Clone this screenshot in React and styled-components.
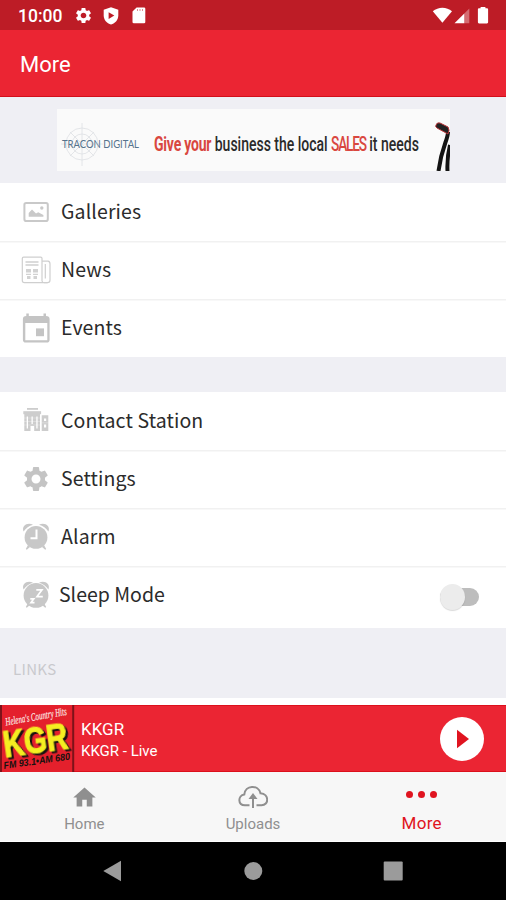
import React from 'react';
import styled, { createGlobalStyle } from 'styled-components';
import { MdSettings, MdHome } from 'react-icons/md';

const GlobalStyle = createGlobalStyle`
    body {
        margin: 0;
        background-color: #ffffff;
    }
    * {
        box-sizing: border-box;
    }
    svg {
        display: block;
        flex: none;
    }
`

function ShieldIcon(){
 return(
    <svg width="16" height="18" viewBox="0 0 16 18">
        <path fill="#fff" d="M8 0.3 L15.3 2.8 V8.5 C15.3 12.8 12.2 16.2 8 17.6 C3.8 16.2 0.7 12.8 0.7 8.5 V2.8 Z"/>
        <path fill="#bd1c26" d="M5.6 5.3 L11.3 8.6 L5.6 11.9 Z"/>
    </svg>
 );
}

function CardIcon(){
 return(
    <svg width="18" height="17" viewBox="-3 0 18 17">
        <path fill="#fff" d="M4.6 0.5 H12 Q13.3 0.5 13.3 1.8 V15 Q13.3 16.3 12 16.3 H1.8 Q0.5 16.3 0.5 15 V4.6 Z"/>
        <path stroke="#bd1c26" strokeOpacity="0.5" strokeWidth="1" d="M5.5 2 V4 M8 2 V4 M10.5 2 V4"/>
    </svg>
 );
}

function SignalIcons(){
 return(
    <svg width="60" height="20" viewBox="0 0 60 20">
        <path fill="#fff" d="M0.8 6.3 C6.2 1.4 14.6 1.4 20 6.3 L10.4 17.8 Z"/>
        <path fill="#fff" d="M22.5 18.3 L32.3 8.5 V18.3 Z"/>
        <path fill="#fff" fillOpacity="0.35" d="M32.3 8.5 L37.3 3.5 V18.3 H32.3 Z"/>
        <path fill="#fff" d="M48.6 3.2 V2 H53.4 V3.2 H55 Q56.1 3.2 56.1 4.3 V17.3 Q56.1 18.4 55 18.4 H47 Q45.9 18.4 45.9 17.3 V4.3 Q45.9 3.2 47 3.2 Z"/>
    </svg>
 );
}

function BannerAd(){
 return(
    <svg width="393" height="62" viewBox="0 0 393 62">
        <rect width="393" height="62" fill="#fafafa"/>
        <g fill="none" stroke="#dde0e3" strokeWidth="0.8">
            <circle cx="25" cy="35" r="16"/>
            <circle cx="25" cy="35" r="10"/>
            <path d="M25 14 V57 M4 35 H46 M13 23 L37 47 M13 47 L37 23"/>
        </g>
        <text x="5" y="39.3" fontSize="11" fontFamily="Lato, sans-serif" fill="#56738d" textLength="77" lengthAdjust="spacingAndGlyphs">TRACON DIGITAL</text>
        <text transform="translate(97 42) scale(0.667 1)" fill="#2b2b2b" fontWeight="500" fontSize="21">
            <tspan fill="#d9473f" fontWeight="700" letterSpacing="-0.3">Give your</tspan> business the local <tspan fill="#d9473f" fontSize="20.5" letterSpacing="-1.8">SALES</tspan> it needs
        </text>
        <path fill="none" stroke="#141414" strokeWidth="4" d="M391 23 C391 31 384.5 38 381.5 62"/>
        <path fill="none" stroke="#141414" strokeWidth="4" d="M393 36 C391 44 390 52 390.5 62"/>
        <path fill="#222" stroke="#b93538" strokeWidth="1" d="M379 16 Q380 13 383 14 L391 18 Q393 21 391 25 L380 19 Q378 18 379 16 Z"/>
    </svg>
 );
}

function GalleryIcon(){
 return(
    <svg width="32" height="32" viewBox="0 0 32 32">
        <rect x="4.4" y="7" width="23.4" height="18" rx="1.8" fill="none" stroke="#c9c9c9" strokeWidth="2"/>
        <path fill="#c9c9c9" d="M8.7 20.8 V17 L12 13.6 L16 17.6 L18.2 16.2 L23.4 19 V20.8 Z"/>
        <circle cx="21.8" cy="12" r="1.7" fill="#c9c9c9"/>
    </svg>
 );
}

function NewsIcon(){
 return(
    <svg width="32" height="32" viewBox="0 0 32 32">
        <g fill="none" stroke="#cfcfcf" strokeWidth="1.2">
            <path d="M22 27 V4.5 Q22 3.2 20.7 3.2 H3.6 Q2.3 3.2 2.3 4.5 V26.5 Q2.3 28.7 4.5 28.7 H27.5"/>
            <path d="M22 27 Q22.3 28.7 24.5 28.7 H27.5 Q30 28.7 30 26 V10 Q30 7.5 28 7.2 H22"/>
            <path d="M25.3 10 V24.5"/>
        </g>
        <path stroke="#cfcfcf" strokeWidth="1.5" d="M5.5 8 H18.5 M5.5 11 H18.5"/>
        <path fill="#d2d2d2" d="M6 15 H11 V18.5 H6 Z M13 15 H18 V18.5 H13 Z M6 19.8 H11 V21 H6 Z M13 19.8 H18 V21 H13 Z M7 22 H10.5 V25 H7 Z M13.5 22 H17 V25 H13.5 Z"/>
    </svg>
 );
}

function EventsIcon(){
 return(
    <svg width="32" height="32" viewBox="0 0 32 32">
        <path fill="#c4c4c4" fillRule="evenodd" d="M6.3 1.5 H8.8 V4 H23.5 V1.5 H26 V4 Q29.6 4 29.6 7 V27.8 Q29.6 30.6 26.8 30.6 H5.7 Q2.9 30.6 2.9 27.8 V7 Q2.9 4 6.3 4 Z M5.3 11 V28.3 H27.3 V11 Z"/>
        <rect x="16" y="16.4" width="8" height="7.8" fill="#c4c4c4"/>
    </svg>
 );
}

function StationIcon(){
 return(
    <svg width="32" height="32" viewBox="0 0 32 32">
        <g fill="#cdcdcd">
            <rect x="7" y="3" width="11" height="1.8"/>
            <rect x="3.3" y="6.2" width="17.8" height="3"/>
            <path fillRule="evenodd" d="M4.3 9 H20 V26 H14.2 V21 H10.5 V26 H4.3 Z M6.7 11.5 V23.5 H8 V11.5 Z M11.5 11.5 V19 H12.8 V11.5 Z M16.3 11.5 V23.5 H17.6 V11.5 Z"/>
            <path fillRule="evenodd" d="M21.7 10.3 H28.3 V26 H21.7 Z M24 13.5 V16 H26.2 V13.5 Z M24 19.5 V22.5 H26.2 V19.5 Z"/>
        </g>
        <path stroke="#fff" strokeOpacity="0.4" strokeWidth="0.7" d="M4 13 H20 M4 16.5 H20 M4 20 H20 M21.5 17.8 H28.5"/>
    </svg>
 );
}

function ClockIcon({ sleep }){
 return(
    <svg width="32" height="32" viewBox="0 0 32 32">
        <g fill="#c8c8c8">
            <path d="M3.6 10.5 C1 4.5 8 0.8 13 3.8 Q7 5.6 3.6 10.5 Z"/>
            <path d="M28.4 10.5 C31 4.5 24 0.8 19 3.8 Q25 5.6 28.4 10.5 Z"/>
            <circle cx="16" cy="16.4" r={sleep ? 12.4 : 11.4}/>
            <path d="M8 24 L10 26 L6.8 28.8 L5.8 28 Z M24 24 L22 26 L25.2 28.8 L26.2 28 Z"/>
        </g>
        {sleep
            ? <path fill="none" stroke="#fff" strokeWidth="1.7" d="M16.3 10.8 H22 L17 17.6 H22.8 M10.3 19.8 H13.8 L11 23.6 H14.5"/>
            : <path fill="none" stroke="#fff" strokeWidth="2" d="M16.5 8.5 V17.3 H10.5"/>}
    </svg>
 );
}

function StationLogo(){
 return(
    <LogoBox width="74" height="67" viewBox="0 0 74 67">
        <rect width="74" height="67" fill="#e4202c"/>
        <path stroke="#7d1219" strokeWidth="2" d="M1 0 V67 M73.2 0 V67"/>
        <text transform="translate(6 20.5) rotate(-10)" fontSize="11" fontStyle="italic" fontFamily="'Liberation Serif', serif" fill="#f9dcd9" stroke="#f9dcd9" strokeWidth="0.3" textLength="62" lengthAdjust="spacingAndGlyphs">Helena's Country Hits</text>
        <LogoText transform="translate(5 52.5) rotate(-8)" fontSize="37" textLength="65" lengthAdjust="spacingAndGlyphs">KGR</LogoText>
        <text transform="translate(4 64) rotate(-8)" fontSize="10" fontWeight="700" fontStyle="italic" fontFamily="'Liberation Sans', sans-serif" fill="#15120f" textLength="67" lengthAdjust="spacingAndGlyphs">FM 93.1•AM 680</text>
    </LogoBox>
 );
}

function UploadIcon(){
 return(
    <svg width="30" height="24" viewBox="0 0 30 24">
        <path fill="none" stroke="#8f8f8f" strokeWidth="2" d="M11.5 20.3 H7 C-0.5 20 -0.3 10.5 6.3 9.5 C7 0 20.5 -0.8 22.5 8.3 C31.5 9 31 20.3 23.5 20.3 H18.5"/>
        <path fill="none" stroke="#8f8f8f" strokeWidth="2" d="M15 23 V10"/>
        <path fill="#8f8f8f" d="M15 8 L19.5 14 H10.5 Z"/>
    </svg>
 );
}

function App(){
 return(
 <Screen>
    <GlobalStyle/>
    <StatusBar>
        <Clock>10:00</Clock>
        <MdSettings size={19}/>
        <ShieldIcon/>
        <CardIcon/>
        <StatusRight><SignalIcons/></StatusRight>
    </StatusBar>
    <Header>More</Header>
    <AdArea><BannerAd/></AdArea>

    <Menu>
        <Item><GalleryIcon/><Label>Galleries</Label></Item>
        <Item><NewsIcon/><Label>News</Label></Item>
        <Item><EventsIcon/><Label>Events</Label></Item>
    </Menu>
    <Gap/>
    <Menu>
        <Item><StationIcon/><Label>Contact Station</Label></Item>
        <Item><IconBox><MdSettings size={30}/></IconBox><Label>Settings</Label></Item>
        <Item><ClockIcon/><Label>Alarm</Label></Item>
        <Item $tall>
            <ClockIcon sleep/>
            <Label $near>Sleep Mode</Label>
            <Toggle><Knob/></Toggle>
        </Item>
    </Menu>
    <LinksTitle>LINKS</LinksTitle>

    <Player>
        <StationLogo/>
        <div>
            <Station>KKGR</Station>
            <Show>KKGR - Live</Show>
        </div>
        <PlayButton>
            <svg width="14" height="20" viewBox="0 0 14 20"><path fill="#e01420" d="M1 0.8 L13 10 L1 19.2 Z"/></svg>
        </PlayButton>
    </Player>

    <Tabs>
        <Tab><TabIcon><MdHome size={27}/></TabIcon><span>Home</span></Tab>
        <Tab><TabIcon><UploadIcon/></TabIcon><span>Uploads</span></Tab>
        <Tab $active>
            <TabIcon><Dots><i/><i/><i/></Dots></TabIcon>
            <span>More</span>
        </Tab>
    </Tabs>

    <AndroidBar>
        <svg width="20" height="22" viewBox="0 0 20 22"><path fill="#9b9b9b" d="M0.3 11 L18 0.8 V21.2 Z"/></svg>
        <svg width="20" height="20" viewBox="0 0 20 20"><circle cx="10.3" cy="10" r="9" fill="#9b9b9b"/></svg>
        <svg width="20" height="20" viewBox="0 0 20 20"><rect x="0.7" y="0.5" width="19" height="19" rx="1" fill="#9b9b9b"/></svg>
    </AndroidBar>
 </Screen>
 );
}

export default App;

const Screen = styled.div`
    width: 506px;
    height: 900px;
    display: flex;
    flex-direction: column;
    overflow: hidden;
    background-color: #ffffff;
    font-family: Roboto, sans-serif;
`

const StatusBar = styled.div`
    height: 30px;
    padding: 1px 16px 0 18px;
    display: flex;
    align-items: center;
    background-color: #bd1c26;
    color: #ffffff;

    svg + svg {
        margin-left: 10px;
    }
`

const Clock = styled.span`
    width: 56px;
    font-size: 17.5px;
    font-weight: 500;
    line-height: 30px;
`

const StatusRight = styled.div`
    margin-left: auto;
    width: 58px;
    height: 20px;
    margin-top: -1px;
`

const Header = styled.div`
    height: 67px;
    padding: 0 20px;
    line-height: 70px;
    background-color: #eb2533;
    border-bottom: 1px solid #d20f1b;
    color: #ffffff;
    font-size: 22px;
`

const AdArea = styled.div`
    height: 86px;
    padding: 12px 0 0 57px;
    background-color: #efeff4;
`

const LogoBox = styled.svg`
    overflow: visible;
`

const LogoText = styled.text`
    font-family: "Liberation Sans", sans-serif;
    font-weight: 700;
    fill: #f5ee21;
    stroke: #f5ee21;
    stroke-width: 1.2px;
    filter: drop-shadow(2px 2px 0 #15120f);
`

const Menu = styled.div`
    display: flex;
    flex-direction: column;
    background-color: #ffffff;
`

const Item = styled.div`
    height: ${props => props.$tall ? '62px' : '58px'};
    padding: 0 27px 0 20px;
    padding-bottom: ${props => props.$tall ? '4px' : '0'};
    display: flex;
    align-items: center;

    & + & {
        box-shadow: inset 0 2px 0 -0.5px #f1f1f1;
    }
`

const IconBox = styled.div`
    width: 32px;
    display: flex;
    justify-content: center;
    color: #c4c4c4;
`

const Label = styled.span`
    margin: -2px 0 0 ${props => props.$near ? '7px' : '9px'};
    font-family: "Noto Sans CJK SC", "Noto Sans", sans-serif;
    font-size: 19.5px;
    line-height: 30px;
    letter-spacing: ${props => props.$near ? '0' : '0.12px'};
    color: #2b2b2b;
    white-space: nowrap;
`

const Toggle = styled.div`
    width: 39px;
    height: 18px;
    margin: 4px 0 0 auto;
    display: flex;
    align-items: center;
    border-radius: 9px;
    background-color: #bdbdbd;
`

const Knob = styled.div`
    width: 25px;
    height: 26px;
    flex: none;
    border-radius: 50%;
    background-color: #ececec;
    box-shadow: 0 1px 1px rgba(0, 0, 0, 0.15);
`

const Gap = styled.div`
    height: 35px;
    background-color: #efeff4;
`

const LinksTitle = styled.div`
    height: 70px;
    padding: 30px 13px 0;
    background-color: #efeff4;
    color: #c9c9cd;
    font-family: "Noto Sans CJK SC", "Noto Sans", sans-serif;
    font-size: 15px;
    line-height: 22px;
    letter-spacing: 0.3px;
`

const Player = styled.div`
    height: 67px;
    margin-top: 7px;
    padding-right: 22px;
    display: flex;
    align-items: center;
    background-color: #eb2533;
    box-shadow: inset 0 1px 0 #dc101c, inset 0 -1px 0 #dc101c;
    color: #ffffff;

    > div:nth-child(2) {
        margin: 4px 0 0 7px;
    }
`

const Station = styled.div`
    font-size: 17px;
    line-height: 21px;
`

const Show = styled.div`
    font-size: 15px;
    line-height: 22px;
`

const PlayButton = styled.div`
    width: 44px;
    height: 44px;
    margin-left: auto;
    padding-left: 2px;
    display: flex;
    align-items: center;
    justify-content: center;
    border-radius: 50%;
    background-color: #ffffff;
`

const Tabs = styled.div`
    height: 70px;
    display: flex;
    background-color: #f7f7f7;
    border-bottom: 1px solid #ffffff;
`

const Tab = styled.div`
    flex: 1;
    padding-top: 10px;
    display: flex;
    flex-direction: column;
    align-items: center;
    color: ${props => props.$active ? '#e01420' : '#8f8f8f'};
    font-size: ${props => props.$active ? '17px' : '15px'};
    line-height: 20px;

    span {
        margin-top: ${props => props.$active ? '1px' : '2px'};
        letter-spacing: ${props => props.$active ? '0.3px' : '0'};
    }
`

const TabIcon = styled.div`
    height: 30px;
    display: flex;
    align-items: center;
`

const Dots = styled.div`
    display: flex;
    gap: 5px;
    padding-bottom: 5px;

    i {
        width: 7px;
        height: 7px;
        border-radius: 50%;
        background-color: #e01420;
    }
`

const AndroidBar = styled.div`
    height: 58px;
    padding: 0 103px 0 103px;
    display: flex;
    align-items: center;
    justify-content: space-between;
    background-color: #000000;
`
